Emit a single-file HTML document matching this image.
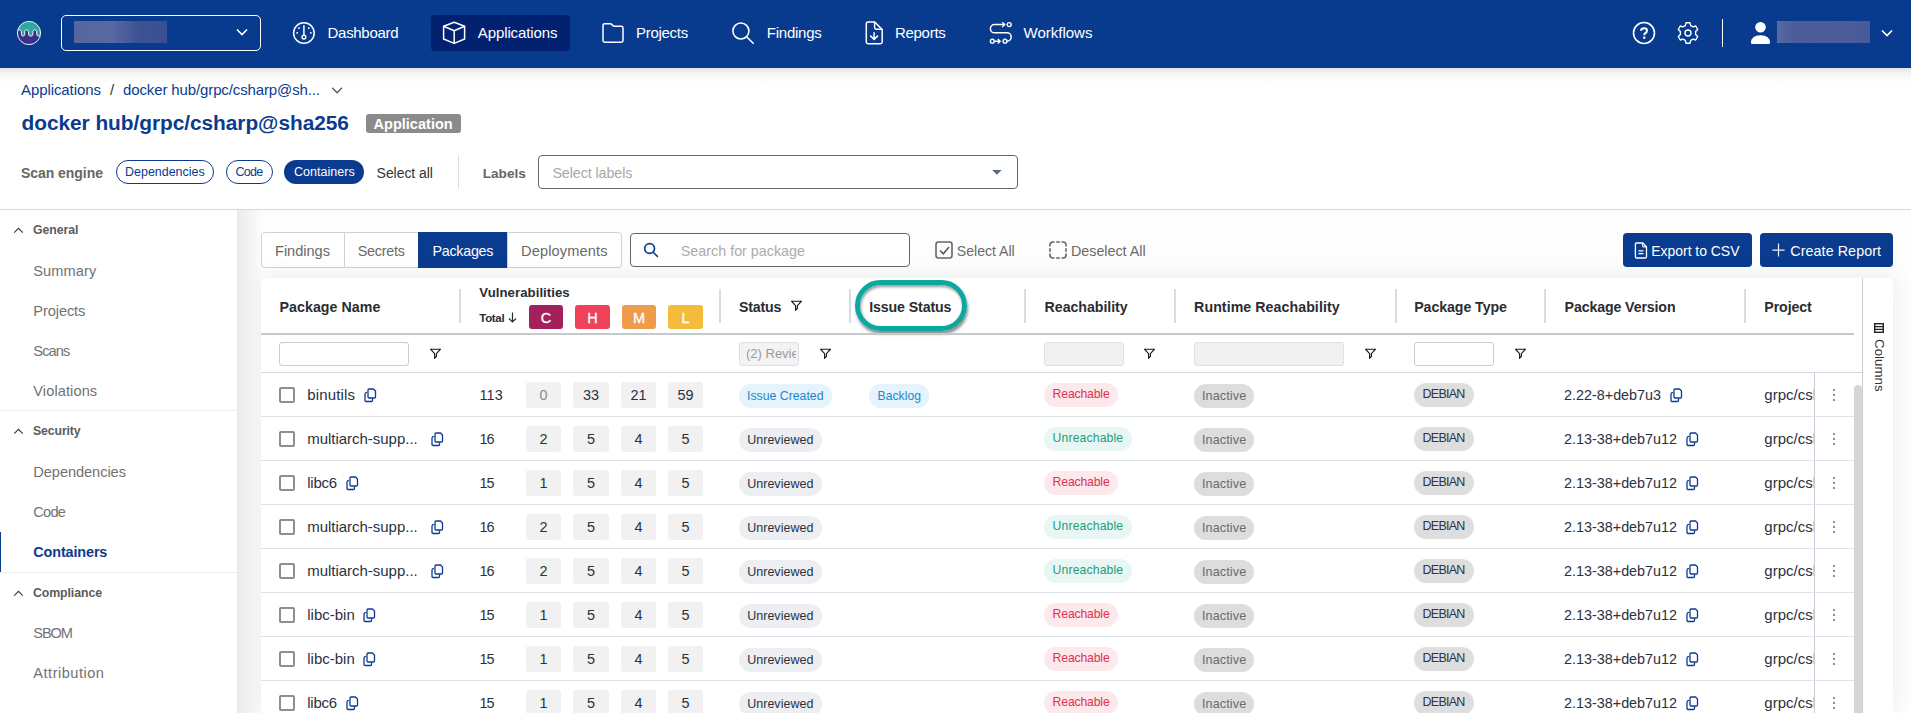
<!DOCTYPE html><html><head><meta charset="utf-8"><style>
html,body{margin:0;padding:0;}
body{width:1911px;height:713px;overflow:hidden;position:relative;background:#fff;font-family:"Liberation Sans",sans-serif;}
.t{position:absolute;line-height:1;white-space:nowrap;}
.b{position:absolute;box-sizing:border-box;}
</style></head><body>
<div class="b" style="left:0px;top:0px;width:1911px;height:68px;background:#083a8e;"></div>
<div class="b" style="left:0px;top:68px;width:1911px;height:15px;background:linear-gradient(#e3e3e3,#f2f2f2 30%,#fafafa 65%,rgba(255,255,255,0));"></div>
<svg class="b" style="left:16px;top:20px;" width="27" height="27" viewBox="0 0 27 27"><clipPath id="lc"><circle cx="13" cy="13" r="11.6"/></clipPath>
<g clip-path="url(#lc)"><rect x="0" y="0" width="27" height="27" fill="#2da89f"/>
<path d="M-1 9.8 L3.4 9.8 Q5.4 9.8 5.4 11.8 L5.4 14.1 Q5.4 16.1 7.05 16.1 Q8.7 16.1 8.7 14.1 L8.7 11.8 Q8.7 9.8 10.6 9.8 Q12.5 9.8 12.5 11.8 L12.5 14.1 Q12.5 16.1 14.7 16.1 Q16.9 16.1 16.9 14.1 L16.9 11.8 Q16.9 9.8 18.8 9.8 Q20.7 9.8 20.7 11.8 L20.7 14.1 Q20.7 16.1 22.7 16.1 L28 16.5 L28 28 L-1 28 Z" fill="#3c2f8a" stroke="#fff" stroke-width="0.9"/></g>
<circle cx="13" cy="13" r="11.6" fill="none" stroke="#fff" stroke-width="0.9"/></svg>
<div class="b" style="left:61px;top:15px;width:200px;height:36px;border:1.5px solid #fff;border-radius:5px;"></div>
<div class="b" style="left:74px;top:21px;width:93px;height:22px;background:linear-gradient(90deg,#5866a0 0%,#5a68a2 40%,#3d5293 70%,#3a4f92 100%);"></div>
<svg class="b" style="left:236px;top:28px;" width="12" height="8" viewBox="0 0 12 8"><path d="M1 1.5 L6 6.5 L11 1.5" fill="none" stroke="#fff" stroke-width="1.6"/></svg>
<div class="b" style="left:431px;top:15px;width:139px;height:36px;background:#022171;border-radius:4px;"></div>
<svg class="b" style="left:291px;top:21px;" width="26" height="24" viewBox="0 0 26 24"><circle cx="12.9" cy="12" r="10.3" fill="none" stroke="#fff" stroke-width="1.5"/>
<line x1="12.9" y1="4.3" x2="12.9" y2="14" stroke="#fff" stroke-width="1.5"/><circle cx="12.9" cy="16.1" r="1.9" fill="none" stroke="#fff" stroke-width="1.4"/>
<rect x="7.2" y="6.3" width="1.6" height="1.6" fill="#fff"/><rect x="17" y="6.3" width="1.6" height="1.6" fill="#fff"/><rect x="5.4" y="11.1" width="1.6" height="1.6" fill="#fff"/><rect x="19" y="11.1" width="1.6" height="1.6" fill="#fff"/></svg>
<div class="t" style="left:327.60px;top:25px;font-size:15px;letter-spacing:-0.313px;color:#fff;font-weight:normal;">Dashboard</div>
<svg class="b" style="left:441px;top:21px;" width="26" height="24" viewBox="0 0 26 24"><path d="M13.2 1.3 L23.6 5.2 L23.6 18 L13.2 22.4 L2.6 18 L2.6 5.2 Z" fill="none" stroke="#fff" stroke-width="1.5" stroke-linejoin="round"/>
<path d="M2.6 5.2 L13.2 9.8 L23.6 5.2 M13.2 9.8 L13.2 22.4" fill="none" stroke="#fff" stroke-width="1.5" stroke-linejoin="round"/></svg>
<div class="t" style="left:477.80px;top:25px;font-size:15px;letter-spacing:-0.109px;color:#fff;font-weight:normal;">Applications</div>
<svg class="b" style="left:600px;top:21px;" width="26" height="24" viewBox="0 0 26 24"><path d="M3 4.5 Q3 2.8 4.7 2.8 L10.3 2.8 Q11.2 2.8 12 3.6 L13 4.6 Q13.8 5.3 14.8 5.3 L21.3 5.3 Q23 5.3 23 7 L23 19.5 Q23 21.2 21.3 21.2 L4.7 21.2 Q3 21.2 3 19.5 Z" fill="none" stroke="#fff" stroke-width="1.5" stroke-linejoin="round"/></svg>
<div class="t" style="left:635.90px;top:25px;font-size:15px;letter-spacing:-0.257px;color:#fff;font-weight:normal;">Projects</div>
<svg class="b" style="left:729px;top:20px;" width="28" height="26" viewBox="0 0 28 26"><circle cx="11.9" cy="11" r="8" fill="none" stroke="#fff" stroke-width="1.6"/><line x1="17.6" y1="16.8" x2="24.2" y2="23.3" stroke="#fff" stroke-width="1.6" stroke-linecap="round"/></svg>
<div class="t" style="left:766.80px;top:25px;font-size:15px;letter-spacing:-0.243px;color:#fff;font-weight:normal;">Findings</div>
<svg class="b" style="left:861px;top:20px;" width="26" height="26" viewBox="0 0 26 26"><path d="M7 2.1 L13.8 2.1 L21.2 9.5 L21.2 22 Q21.2 23.7 19.5 23.7 L7 23.7 Q5.3 23.7 5.3 22 L5.3 3.8 Q5.3 2.1 7 2.1 Z" fill="none" stroke="#fff" stroke-width="1.5" stroke-linejoin="round"/>
<path d="M13.6 2.1 L13.6 7.5 Q13.6 9.2 15.3 9.2 L21.2 9.2" fill="none" stroke="#fff" stroke-width="1.4"/>
<path d="M13.1 12.2 L13.1 19.3 M9.2 15.6 L13.1 19.4 L17 15.6" fill="none" stroke="#fff" stroke-width="1.5"/></svg>
<div class="t" style="left:894.90px;top:25px;font-size:15px;letter-spacing:-0.267px;color:#fff;font-weight:normal;">Reports</div>
<svg class="b" style="left:986px;top:19px;" width="30" height="28" viewBox="0 0 30 28"><circle cx="23.2" cy="5.6" r="2" fill="none" stroke="#fff" stroke-width="1.4"/>
<path d="M18.5 5.6 L8.5 5.6 A4.1 4.1 0 0 0 8.5 13.8 L21 13.8 A4.2 4.2 0 0 1 21 22.2" fill="none" stroke="#fff" stroke-width="1.5"/>
<path d="M16.2 3.2 L18.7 5.6 L16.2 8" fill="none" stroke="#fff" stroke-width="1.4"/>
<circle cx="6.3" cy="22.2" r="1.9" fill="none" stroke="#fff" stroke-width="1.4"/><path d="M8.3 22.2 L14.2 22.2 M11.8 19.9 L14.2 22.2 L11.8 24.5" fill="none" stroke="#fff" stroke-width="1.4"/>
<circle cx="19" cy="22.2" r="1.9" fill="none" stroke="#fff" stroke-width="1.4"/></svg>
<div class="t" style="left:1023.60px;top:25px;font-size:15px;letter-spacing:-0.012px;color:#fff;font-weight:normal;">Workflows</div>
<svg class="b" style="left:1632px;top:21px;" width="24" height="24" viewBox="0 0 24 24"><circle cx="12" cy="12" r="10.5" fill="none" stroke="#fff" stroke-width="1.6"/>
<path d="M9 9.8 Q9 7.3 12 7.3 Q15 7.3 15 9.6 Q15 11.3 13.3 12.1 Q12.2 12.7 12.2 14.3" fill="none" stroke="#fff" stroke-width="2"/><circle cx="12.2" cy="16.7" r="1.2" fill="#fff"/></svg>
<svg class="b" style="left:1676px;top:21px;" width="24" height="24" viewBox="0 0 24 24"><path d="M10 1.8 L14 1.8 L14.7 4.6 L17 5.9 L19.7 5 L21.7 8.5 L19.6 10.5 L19.6 13.5 L21.7 15.5 L19.7 19 L17 18.1 L14.7 19.4 L14 22.2 L10 22.2 L9.3 19.4 L7 18.1 L4.3 19 L2.3 15.5 L4.4 13.5 L4.4 10.5 L2.3 8.5 L4.3 5 L7 5.9 L9.3 4.6 Z" fill="none" stroke="#fff" stroke-width="1.4" stroke-linejoin="round"/>
<circle cx="12" cy="12" r="3" fill="none" stroke="#fff" stroke-width="1.4"/></svg>
<div class="b" style="left:1722px;top:19px;width:1px;height:28px;background:#fff;"></div>
<svg class="b" style="left:1748px;top:21px;" width="24" height="24" viewBox="0 0 24 24"><circle cx="12.5" cy="6.3" r="5.3" fill="#fff"/><path d="M3 21.8 Q3 14.2 12.5 14.2 Q22 14.2 22 21.8 Q22 23 20.8 23 L4.2 23 Q3 23 3 21.8 Z" fill="#fff"/></svg>
<div class="b" style="left:1777px;top:21px;width:93px;height:22px;background:linear-gradient(90deg,#5a68a0 0%,#4b5c98 20%,#4d5d99 80%,#46589a 100%);"></div>
<svg class="b" style="left:1881px;top:29px;" width="12" height="8" viewBox="0 0 12 8"><path d="M1 1.5 L6 6.5 L11 1.5" fill="none" stroke="#fff" stroke-width="1.6"/></svg>
<div class="t" style="left:21.00px;top:82px;font-size:15px;letter-spacing:-0.082px;color:#0b3b8f;font-weight:normal;">Applications</div>
<div class="t" style="left:110px;top:82.00px;font-size:15px;color:#333;font-weight:normal;">/</div>
<div class="t" style="left:123.00px;top:82px;font-size:15px;letter-spacing:-0.122px;color:#0b3b8f;font-weight:normal;">docker hub/grpc/csharp@sh...</div>
<svg class="b" style="left:331px;top:86px;" width="13" height="8" viewBox="0 0 13 8"><path d="M1.2 1.8 L6.1 6.8 L11 1.8" fill="none" stroke="#4f5b6d" stroke-width="1.3"/></svg>
<div class="t" style="left:21.50px;top:113px;font-size:20.85px;letter-spacing:-0.038px;color:#0b3b8f;font-weight:bold;">docker hub/grpc/csharp@sha256</div>
<div class="b" style="left:366px;top:114px;width:95px;height:19px;background:#8b8b8b;border-radius:3px;"></div>
<div class="t" style="left:373.50px;top:117px;font-size:14.5px;letter-spacing:0.025px;color:#fff;font-weight:bold;">Application</div>
<div class="t" style="left:21.10px;top:166px;font-size:14px;letter-spacing:-0.065px;color:#666;font-weight:bold;">Scan engine</div>
<div class="b" style="left:116px;top:160px;width:98px;height:24px;border:1.3px solid #0b3b8f;border-radius:12px;"></div>
<div class="t" style="left:125.00px;top:166px;font-size:12.5px;letter-spacing:-0.018px;color:#0b3b8f;font-weight:normal;">Dependencies</div>
<div class="b" style="left:226px;top:160px;width:47px;height:24px;border:1.3px solid #0b3b8f;border-radius:12px;"></div>
<div class="t" style="left:235.50px;top:166px;font-size:12.5px;letter-spacing:-0.700px;color:#0b3b8f;font-weight:normal;">Code</div>
<div class="b" style="left:284px;top:160px;width:80px;height:24px;background:#0b3b8f;border-radius:12px;"></div>
<div class="t" style="left:294.00px;top:166px;font-size:12.5px;letter-spacing:0.028px;color:#fff;font-weight:normal;">Containers</div>
<div class="t" style="left:376.60px;top:166px;font-size:14px;letter-spacing:-0.056px;color:#333;font-weight:normal;">Select all</div>
<div class="b" style="left:458px;top:155px;width:1px;height:34px;background:#ddd;"></div>
<div class="t" style="left:482.80px;top:167px;font-size:13.6px;letter-spacing:-0.020px;color:#666;font-weight:bold;">Labels</div>
<div class="b" style="left:538px;top:155px;width:480px;height:34px;border:1px solid #666;border-radius:4px;"></div>
<div class="t" style="left:552.40px;top:166px;font-size:14.3px;letter-spacing:-0.083px;color:#a7a7a7;font-weight:normal;">Select labels</div>
<svg class="b" style="left:990px;top:169px;" width="13" height="8" viewBox="0 0 13 8"><path d="M2.2 1 L11.7 1 L6.95 5.7 Z" fill="#5a6a7d"/></svg>
<div class="b" style="left:0px;top:209px;width:1911px;height:1px;background:#d3d7dc;"></div>
<div class="b" style="left:237px;top:210px;width:1674px;height:503px;background:#fdfdfd;"></div>
<div class="b" style="left:237px;top:210px;width:26px;height:503px;background:linear-gradient(90deg,rgba(0,0,0,0.075),rgba(0,0,0,0));"></div>
<svg class="b" style="left:13px;top:227px;" width="11" height="7" viewBox="0 0 11 7"><path d="M1.2 5.6 L5.5 1.3 L9.8 5.6" fill="none" stroke="#2e3a4d" stroke-width="1.1"/></svg>
<div class="t" style="left:33.00px;top:224px;font-size:12.3px;letter-spacing:-0.050px;color:#5c5c5c;font-weight:bold;">General</div>
<div class="t" style="left:33.30px;top:264px;font-size:14.6px;letter-spacing:0.092px;color:#727272;font-weight:normal;">Summary</div>
<div class="t" style="left:33.30px;top:304px;font-size:14.6px;letter-spacing:-0.093px;color:#727272;font-weight:normal;">Projects</div>
<div class="t" style="left:33.30px;top:344px;font-size:14.6px;letter-spacing:-0.875px;color:#727272;font-weight:normal;">Scans</div>
<div class="t" style="left:33.30px;top:384px;font-size:14.6px;letter-spacing:0.094px;color:#727272;font-weight:normal;">Violations</div>
<div class="b" style="left:0px;top:410px;width:237px;height:1px;background:#eceef2;"></div>
<svg class="b" style="left:13px;top:428px;" width="11" height="7" viewBox="0 0 11 7"><path d="M1.2 5.6 L5.5 1.3 L9.8 5.6" fill="none" stroke="#2e3a4d" stroke-width="1.1"/></svg>
<div class="t" style="left:33.00px;top:425px;font-size:12.3px;letter-spacing:-0.121px;color:#5c5c5c;font-weight:bold;">Security</div>
<div class="t" style="left:33.30px;top:465px;font-size:14.6px;letter-spacing:-0.059px;color:#727272;font-weight:normal;">Dependencies</div>
<div class="t" style="left:33.30px;top:505px;font-size:14.6px;letter-spacing:-0.733px;color:#727272;font-weight:normal;">Code</div>
<div class="t" style="left:33.30px;top:545px;font-size:14.4px;letter-spacing:-0.122px;color:#0b3b8f;font-weight:bold;">Containers</div>
<div class="b" style="left:0px;top:532px;width:1.2px;height:40px;background:#0b3b8f;"></div>
<div class="b" style="left:0px;top:572px;width:237px;height:1px;background:#eceef2;"></div>
<svg class="b" style="left:13px;top:590px;" width="11" height="7" viewBox="0 0 11 7"><path d="M1.2 5.6 L5.5 1.3 L9.8 5.6" fill="none" stroke="#2e3a4d" stroke-width="1.1"/></svg>
<div class="t" style="left:33.00px;top:587px;font-size:12.3px;letter-spacing:-0.078px;color:#5c5c5c;font-weight:bold;">Compliance</div>
<div class="t" style="left:33.30px;top:626px;font-size:14.6px;letter-spacing:-1.100px;color:#727272;font-weight:normal;">SBOM</div>
<div class="t" style="left:33.30px;top:666px;font-size:14.6px;letter-spacing:0.495px;color:#727272;font-weight:normal;">Attribution</div>
<div class="b" style="left:261px;top:232px;width:361px;height:36px;background:#fff;border:1px solid #cfd3d8;border-radius:4px;"></div>
<div class="b" style="left:344px;top:232px;width:1px;height:36px;background:#cfd3d8;"></div>
<div class="b" style="left:418px;top:232px;width:89px;height:36px;background:#0b3b8f;"></div>
<div class="b" style="left:507px;top:232px;width:1px;height:36px;background:#cfd3d8;"></div>
<div class="t" style="left:275.00px;top:244px;font-size:14.6px;letter-spacing:-0.029px;color:#6a6a6a;font-weight:normal;">Findings</div>
<div class="t" style="left:357.80px;top:244px;font-size:14.3px;letter-spacing:-0.233px;color:#6a6a6a;font-weight:normal;">Secrets</div>
<div class="t" style="left:432.50px;top:244px;font-size:14.3px;letter-spacing:-0.271px;color:#fff;font-weight:normal;">Packages</div>
<div class="t" style="left:521.00px;top:244px;font-size:14.6px;letter-spacing:0.130px;color:#6a6a6a;font-weight:normal;">Deployments</div>
<div class="b" style="left:630px;top:233px;width:280px;height:34px;background:#fff;border:1px solid #666;border-radius:4px;"></div>
<svg class="b" style="left:643px;top:242px;" width="16" height="16" viewBox="0 0 16 16"><circle cx="6.6" cy="6.5" r="4.9" fill="none" stroke="#0b3b8f" stroke-width="1.7"/><line x1="10.2" y1="10.2" x2="14.4" y2="14.4" stroke="#0b3b8f" stroke-width="1.5" stroke-linecap="round"/></svg>
<div class="t" style="left:680.80px;top:244px;font-size:14.3px;letter-spacing:0.012px;color:#ababab;font-weight:normal;">Search for package</div>
<svg class="b" style="left:934.5px;top:241px;" width="18" height="18" viewBox="0 0 18 18"><rect x="1" y="1" width="16" height="16" rx="2.5" fill="none" stroke="#666" stroke-width="1.6"/><path d="M5 9.5 L8.3 12.8 L14 6" fill="none" stroke="#555" stroke-width="1.5"/></svg>
<div class="t" style="left:956.80px;top:244px;font-size:14.15px;letter-spacing:-0.033px;color:#6a6a6a;font-weight:normal;">Select All</div>
<svg class="b" style="left:1048.5px;top:241px;" width="18" height="18" viewBox="0 0 18 18"><path d="M1 5.5 L1 4 Q1 1 4 1 L5.5 1 M12.5 1 L14 1 Q17 1 17 4 L17 5.5 M17 12.5 L17 14 Q17 17 14 17 L12.5 17 M5.5 17 L4 17 Q1 17 1 14 L1 12.5 M7.2 1 L10.8 1 M17 7.2 L17 10.8 M10.8 17 L7.2 17 M1 10.8 L1 7.2" fill="none" stroke="#666" stroke-width="1.6"/></svg>
<div class="t" style="left:1071.00px;top:244px;font-size:14.3px;letter-spacing:-0.009px;color:#6a6a6a;font-weight:normal;">Deselect All</div>
<div class="b" style="left:1623px;top:233px;width:129px;height:34px;background:#0b3b8f;border-radius:4px;"></div>
<svg class="b" style="left:1634px;top:242px;" width="14" height="17" viewBox="0 0 14 17"><path d="M2.6 1 L8.8 1 L12.5 4.7 L12.5 14.8 Q12.5 16 11.3 16 L2.6 16 Q1.4 16 1.4 14.8 L1.4 2.2 Q1.4 1 2.6 1 Z" fill="none" stroke="#fff" stroke-width="1.3" stroke-linejoin="round"/><path d="M8.6 1.2 L8.6 3.8 Q8.6 4.9 9.7 4.9 L12.3 4.9" fill="none" stroke="#fff" stroke-width="1.1"/><path d="M4.4 8.8 L9.4 8.8 M4.4 11.6 L9.4 11.6" stroke="#fff" stroke-width="1.3"/></svg>
<div class="t" style="left:1651.30px;top:244px;font-size:14px;letter-spacing:-0.042px;color:#fff;font-weight:normal;">Export to CSV</div>
<div class="b" style="left:1760px;top:233px;width:133px;height:34px;background:#0b3b8f;border-radius:4px;"></div>
<svg class="b" style="left:1772px;top:243px;" width="14" height="14" viewBox="0 0 14 14"><path d="M6.5 0.6 L6.5 13.6 M0.4 7 L12.6 7" stroke="#f0f0f5" stroke-width="1.25"/></svg>
<div class="t" style="left:1790.30px;top:244px;font-size:14.3px;letter-spacing:0.075px;color:#fff;font-weight:normal;">Create Report</div>
<div class="b" style="left:261px;top:278px;width:1632px;height:435px;background:#fff;border-radius:5px 5px 0 0;box-shadow:0 -2px 22px rgba(0,0,0,0.075);"></div>
<div class="t" style="left:279.60px;top:300px;font-size:14.2px;letter-spacing:0.050px;color:#2a2d33;font-weight:bold;">Package Name</div>
<div class="b" style="left:459px;top:289px;width:1.5px;height:34px;background:#d6dbe6;"></div>
<div class="b" style="left:719px;top:289px;width:1.5px;height:34px;background:#d6dbe6;"></div>
<div class="b" style="left:849px;top:289px;width:1.5px;height:34px;background:#d6dbe6;"></div>
<div class="b" style="left:1024px;top:289px;width:1.5px;height:34px;background:#d6dbe6;"></div>
<div class="b" style="left:1174px;top:289px;width:1.5px;height:34px;background:#d6dbe6;"></div>
<div class="b" style="left:1395px;top:289px;width:1.5px;height:34px;background:#d6dbe6;"></div>
<div class="b" style="left:1544px;top:289px;width:1.5px;height:34px;background:#d6dbe6;"></div>
<div class="b" style="left:1744px;top:289px;width:1.5px;height:34px;background:#d6dbe6;"></div>
<div class="t" style="left:479.30px;top:286px;font-size:13.2px;letter-spacing:0.054px;color:#2a2d33;font-weight:bold;">Vulnerabilities</div>
<div class="t" style="left:479.30px;top:313px;font-size:11.5px;letter-spacing:-0.325px;color:#2a2d33;font-weight:bold;">Total</div>
<svg class="b" style="left:508px;top:312px;" width="9" height="11" viewBox="0 0 9 11"><path d="M4.5 0.5 L4.5 10 M1 6.5 L4.5 10 L8 6.5" fill="none" stroke="#2a2d33" stroke-width="1.2"/></svg>
<div class="b" style="left:529px;top:305px;width:34px;height:24px;background:#a3205c;border-radius:3px;"></div>
<div class="t" style="left:529px;top:305px;width:34px;height:24px;line-height:26px;text-align:center;font-size:14.5px;font-weight:normal;color:#fff;-webkit-text-stroke:0.3px #fff;">C</div>
<div class="b" style="left:575px;top:305px;width:35px;height:24px;background:#f0415a;border-radius:3px;"></div>
<div class="t" style="left:575px;top:305px;width:35px;height:24px;line-height:26px;text-align:center;font-size:14.5px;font-weight:normal;color:#fff;-webkit-text-stroke:0.3px #fff;">H</div>
<div class="b" style="left:622px;top:305px;width:34px;height:24px;background:#ee9b4c;border-radius:3px;"></div>
<div class="t" style="left:622px;top:305px;width:34px;height:24px;line-height:26px;text-align:center;font-size:14.5px;font-weight:normal;color:#fff;-webkit-text-stroke:0.3px #fff;">M</div>
<div class="b" style="left:668px;top:305px;width:35px;height:24px;background:#f4bc3a;border-radius:3px;"></div>
<div class="t" style="left:668px;top:305px;width:35px;height:24px;line-height:26px;text-align:center;font-size:14.5px;font-weight:normal;color:#fff;-webkit-text-stroke:0.3px #fff;">L</div>
<div class="t" style="left:739.10px;top:300px;font-size:14.2px;letter-spacing:-0.220px;color:#2a2d33;font-weight:bold;">Status</div>
<svg class="b" style="left:791px;top:300px;" width="11" height="11" viewBox="0 0 11 11"><path d="M0.6 1.2 L10.4 1.2 L6.4 5.6 L6.4 8.4 L4.6 10.2 L4.6 5.6 Z" fill="none" stroke="#1a1a1a" stroke-width="1.15" stroke-linejoin="miter"/></svg>
<div class="t" style="left:869.20px;top:300px;font-size:14.2px;letter-spacing:-0.114px;color:#2a2d33;font-weight:bold;">Issue Status</div>
<div class="t" style="left:1044.60px;top:300px;font-size:14.2px;letter-spacing:-0.050px;color:#2a2d33;font-weight:bold;">Reachability</div>
<div class="t" style="left:1194.10px;top:300px;font-size:14.2px;letter-spacing:0.063px;color:#2a2d33;font-weight:bold;">Runtime Reachability</div>
<div class="t" style="left:1414.20px;top:300px;font-size:14.2px;letter-spacing:-0.077px;color:#2a2d33;font-weight:bold;">Package Type</div>
<div class="t" style="left:1564.60px;top:300px;font-size:14.2px;letter-spacing:-0.129px;color:#2a2d33;font-weight:bold;">Package Version</div>
<div class="t" style="left:1764.30px;top:300px;font-size:14.2px;letter-spacing:-0.092px;color:#2a2d33;font-weight:bold;">Project</div>
<div class="b" style="left:855px;top:280px;width:112px;height:51px;border:5px solid #0aa89f;border-radius:26px;box-shadow:1px 3px 3px rgba(0,0,0,0.45), inset 1px 2px 3px rgba(0,0,0,0.4);"></div>
<div class="b" style="left:261px;top:333px;width:1593px;height:2px;background:#c5c8cd;"></div>
<div class="b" style="left:279px;top:342px;width:130px;height:24px;border:1px solid #c9ccd1;border-radius:3px;background:#fff;"></div>
<svg class="b" style="left:430px;top:348px;" width="11" height="11" viewBox="0 0 11 11"><path d="M0.6 1.2 L10.4 1.2 L6.4 5.6 L6.4 8.4 L4.6 10.2 L4.6 5.6 Z" fill="none" stroke="#1a1a1a" stroke-width="1.15" stroke-linejoin="miter"/></svg>
<div class="b" style="left:739px;top:342px;width:60px;height:24px;border:1px solid #dde0e5;border-radius:3px;background:#f3f3f4;"></div>
<div class="t" style="left:746px;top:345px;width:50px;height:17px;line-height:17px;overflow:hidden;font-size:13px;color:#9a9a9a;">(2) Reviewed</div>
<svg class="b" style="left:820px;top:348px;" width="11" height="11" viewBox="0 0 11 11"><path d="M0.6 1.2 L10.4 1.2 L6.4 5.6 L6.4 8.4 L4.6 10.2 L4.6 5.6 Z" fill="none" stroke="#1a1a1a" stroke-width="1.15" stroke-linejoin="miter"/></svg>
<div class="b" style="left:1044px;top:342px;width:80px;height:24px;border:1px solid #e0e0e0;border-radius:3px;background:#f1f1f1;"></div>
<svg class="b" style="left:1144px;top:348px;" width="11" height="11" viewBox="0 0 11 11"><path d="M0.6 1.2 L10.4 1.2 L6.4 5.6 L6.4 8.4 L4.6 10.2 L4.6 5.6 Z" fill="none" stroke="#1a1a1a" stroke-width="1.15" stroke-linejoin="miter"/></svg>
<div class="b" style="left:1194px;top:342px;width:150px;height:24px;border:1px solid #e0e0e0;border-radius:3px;background:#f1f1f1;"></div>
<svg class="b" style="left:1365px;top:348px;" width="11" height="11" viewBox="0 0 11 11"><path d="M0.6 1.2 L10.4 1.2 L6.4 5.6 L6.4 8.4 L4.6 10.2 L4.6 5.6 Z" fill="none" stroke="#1a1a1a" stroke-width="1.15" stroke-linejoin="miter"/></svg>
<div class="b" style="left:1414px;top:342px;width:80px;height:24px;border:1px solid #c9ccd1;border-radius:3px;background:#fff;"></div>
<svg class="b" style="left:1515px;top:348px;" width="11" height="11" viewBox="0 0 11 11"><path d="M0.6 1.2 L10.4 1.2 L6.4 5.6 L6.4 8.4 L4.6 10.2 L4.6 5.6 Z" fill="none" stroke="#1a1a1a" stroke-width="1.15" stroke-linejoin="miter"/></svg>
<div class="b" style="left:261px;top:372px;width:1601px;height:1px;background:#d3d7df;"></div>
<div class="b" style="left:1862px;top:278px;width:1px;height:435px;background:#c9cdd4;"></div>
<svg class="b" style="left:1874px;top:323px;" width="10" height="10" viewBox="0 0 10 10"><rect x="0.7" y="0.7" width="8.6" height="8.6" fill="none" stroke="#222" stroke-width="1.4"/><path d="M0.7 3.6 L9.3 3.6 M0.7 6.4 L9.3 6.4" stroke="#222" stroke-width="1.2"/></svg>
<div class="t" style="left:1886px;top:339px;font-size:13.35px;color:#333;transform-origin:0 0;transform:rotate(90deg);">Columns</div>
<div class="b" style="left:279px;top:387px;width:16px;height:16px;border:2px solid #8e8e8e;border-radius:2px;"></div>
<div class="t" style="left:307.20px;top:387px;font-size:15px;letter-spacing:0.157px;color:#2b3140;font-weight:normal;">binutils</div>
<svg class="b" style="left:364px;top:388px;" width="13" height="15" viewBox="0 0 13 15"><path d="M4 3 L4 2 Q4 1 5 1 L9.5 1 L11.5 3 L11.5 9 Q11.5 10 10.5 10 L5 10 Q4 10 4 9 Z" fill="none" stroke="#0b3b8f" stroke-width="1.3" stroke-linejoin="round"/><path d="M3 4.3 Q1 4.5 1 6 L1 12.5 Q1 13.5 2 13.5 L7.5 13.5 Q8.5 13.5 8.5 12.5 L8.5 10.5" fill="none" stroke="#0b3b8f" stroke-width="1.3"/></svg>
<div class="t" style="left:479.50px;top:388px;font-size:14.45px;letter-spacing:0.075px;color:#2b3140;font-weight:normal;">113</div>
<div class="b" style="left:526px;top:382px;width:35px;height:26px;background:#f1f1f1;border-radius:3px;"></div>
<div class="t" style="left:526px;top:382px;width:35px;line-height:26px;text-align:center;font-size:14.45px;color:#8a8a8a;">0</div>
<div class="b" style="left:573px;top:382px;width:36px;height:26px;background:#f1f1f1;border-radius:3px;"></div>
<div class="t" style="left:573px;top:382px;width:36px;line-height:26px;text-align:center;font-size:14.45px;color:#2b3140;">33</div>
<div class="b" style="left:621px;top:382px;width:35px;height:26px;background:#f1f1f1;border-radius:3px;"></div>
<div class="t" style="left:621px;top:382px;width:35px;line-height:26px;text-align:center;font-size:14.45px;color:#2b3140;">21</div>
<div class="b" style="left:668px;top:382px;width:35px;height:26px;background:#f1f1f1;border-radius:3px;"></div>
<div class="t" style="left:668px;top:382px;width:35px;line-height:26px;text-align:center;font-size:14.45px;color:#2b3140;">59</div>
<div class="b" style="left:739px;top:384px;width:93px;height:24px;background:#e4f3fc;border-radius:12px;"></div>
<div class="t" style="left:747.00px;top:390px;font-size:12.3px;letter-spacing:-0.004px;color:#1f86cf;font-weight:normal;">Issue Created</div>
<div class="b" style="left:869px;top:384px;width:60px;height:24px;background:#e4f3fc;border-radius:12px;"></div>
<div class="t" style="left:877.60px;top:390px;font-size:12.2px;letter-spacing:-0.000px;color:#1f86cf;font-weight:normal;">Backlog</div>
<div class="b" style="left:1044px;top:383px;width:74px;height:24px;background:#fde8eb;border-radius:12px;"></div>
<div class="t" style="left:1052.60px;top:388px;font-size:12.2px;letter-spacing:-0.144px;color:#d9344d;font-weight:normal;">Reachable</div>
<div class="b" style="left:1194px;top:384px;width:60px;height:24px;background:#dddddd;border-radius:12px;"></div>
<div class="t" style="left:1202.00px;top:390px;font-size:12.6px;letter-spacing:0.114px;color:#6b6b6b;font-weight:normal;">Inactive</div>
<div class="b" style="left:1414px;top:383px;width:60px;height:24px;background:#dedede;border-radius:12px;"></div>
<div class="t" style="left:1422.60px;top:388px;font-size:12.5px;letter-spacing:-0.770px;color:#2f3440;font-weight:normal;">DEBIAN</div>
<div class="t" style="left:1564.10px;top:388px;font-size:14.4px;letter-spacing:-0.025px;color:#2b3140;font-weight:normal;">2.22-8+deb7u3</div>
<svg class="b" style="left:1669.5px;top:388px;" width="13" height="15" viewBox="0 0 13 15"><path d="M4 3 L4 2 Q4 1 5 1 L9.5 1 L11.5 3 L11.5 9 Q11.5 10 10.5 10 L5 10 Q4 10 4 9 Z" fill="none" stroke="#0b3b8f" stroke-width="1.3" stroke-linejoin="round"/><path d="M3 4.3 Q1 4.5 1 6 L1 12.5 Q1 13.5 2 13.5 L7.5 13.5 Q8.5 13.5 8.5 12.5 L8.5 10.5" fill="none" stroke="#0b3b8f" stroke-width="1.3"/></svg>
<div class="t" style="left:1764.3px;top:384px;width:50px;height:21px;line-height:21px;overflow:hidden;font-size:15px;color:#2b3140;"><span style="position:relative;top:0px">grpc/csharp</span></div>
<div class="b" style="left:1814px;top:373px;width:1px;height:43px;background:#c8cdd6;"></div>
<div class="b" style="left:1833px;top:389px;width:2px;height:2px;background:#8a909b;"></div>
<div class="b" style="left:1833px;top:394px;width:2px;height:2px;background:#8a909b;"></div>
<div class="b" style="left:1833px;top:399px;width:2px;height:2px;background:#8a909b;"></div>
<div class="b" style="left:261px;top:416px;width:1601px;height:1px;background:#dde1ea;"></div>
<div class="b" style="left:279px;top:431px;width:16px;height:16px;border:2px solid #8e8e8e;border-radius:2px;"></div>
<div class="t" style="left:307.20px;top:431px;font-size:15px;letter-spacing:-0.022px;color:#2b3140;font-weight:normal;">multiarch-supp...</div>
<svg class="b" style="left:431px;top:432px;" width="13" height="15" viewBox="0 0 13 15"><path d="M4 3 L4 2 Q4 1 5 1 L9.5 1 L11.5 3 L11.5 9 Q11.5 10 10.5 10 L5 10 Q4 10 4 9 Z" fill="none" stroke="#0b3b8f" stroke-width="1.3" stroke-linejoin="round"/><path d="M3 4.3 Q1 4.5 1 6 L1 12.5 Q1 13.5 2 13.5 L7.5 13.5 Q8.5 13.5 8.5 12.5 L8.5 10.5" fill="none" stroke="#0b3b8f" stroke-width="1.3"/></svg>
<div class="t" style="left:479.50px;top:432px;font-size:14.45px;letter-spacing:-1.050px;color:#2b3140;font-weight:normal;">16</div>
<div class="b" style="left:526px;top:426px;width:35px;height:26px;background:#f1f1f1;border-radius:3px;"></div>
<div class="t" style="left:526px;top:426px;width:35px;line-height:26px;text-align:center;font-size:14.45px;color:#2b3140;">2</div>
<div class="b" style="left:573px;top:426px;width:36px;height:26px;background:#f1f1f1;border-radius:3px;"></div>
<div class="t" style="left:573px;top:426px;width:36px;line-height:26px;text-align:center;font-size:14.45px;color:#2b3140;">5</div>
<div class="b" style="left:621px;top:426px;width:35px;height:26px;background:#f1f1f1;border-radius:3px;"></div>
<div class="t" style="left:621px;top:426px;width:35px;line-height:26px;text-align:center;font-size:14.45px;color:#2b3140;">4</div>
<div class="b" style="left:668px;top:426px;width:35px;height:26px;background:#f1f1f1;border-radius:3px;"></div>
<div class="t" style="left:668px;top:426px;width:35px;line-height:26px;text-align:center;font-size:14.45px;color:#2b3140;">5</div>
<div class="b" style="left:739px;top:428px;width:83px;height:24px;background:#eceef1;border-radius:12px;"></div>
<div class="t" style="left:747.20px;top:434px;font-size:12.5px;letter-spacing:0.022px;color:#2b3140;font-weight:normal;">Unreviewed</div>
<div class="b" style="left:1044px;top:427px;width:88px;height:24px;background:#e8f7f3;border-radius:12px;"></div>
<div class="t" style="left:1052.60px;top:432px;font-size:12.2px;letter-spacing:0.140px;color:#1e9c7b;font-weight:normal;">Unreachable</div>
<div class="b" style="left:1194px;top:428px;width:60px;height:24px;background:#dddddd;border-radius:12px;"></div>
<div class="t" style="left:1202.00px;top:434px;font-size:12.6px;letter-spacing:0.114px;color:#6b6b6b;font-weight:normal;">Inactive</div>
<div class="b" style="left:1414px;top:427px;width:60px;height:24px;background:#dedede;border-radius:12px;"></div>
<div class="t" style="left:1422.60px;top:432px;font-size:12.5px;letter-spacing:-0.770px;color:#2f3440;font-weight:normal;">DEBIAN</div>
<div class="t" style="left:1564.10px;top:432px;font-size:14.4px;letter-spacing:-0.021px;color:#2b3140;font-weight:normal;">2.13-38+deb7u12</div>
<svg class="b" style="left:1686.0px;top:432px;" width="13" height="15" viewBox="0 0 13 15"><path d="M4 3 L4 2 Q4 1 5 1 L9.5 1 L11.5 3 L11.5 9 Q11.5 10 10.5 10 L5 10 Q4 10 4 9 Z" fill="none" stroke="#0b3b8f" stroke-width="1.3" stroke-linejoin="round"/><path d="M3 4.3 Q1 4.5 1 6 L1 12.5 Q1 13.5 2 13.5 L7.5 13.5 Q8.5 13.5 8.5 12.5 L8.5 10.5" fill="none" stroke="#0b3b8f" stroke-width="1.3"/></svg>
<div class="t" style="left:1764.3px;top:428px;width:50px;height:21px;line-height:21px;overflow:hidden;font-size:15px;color:#2b3140;"><span style="position:relative;top:0px">grpc/csharp</span></div>
<div class="b" style="left:1814px;top:417px;width:1px;height:43px;background:#c8cdd6;"></div>
<div class="b" style="left:1833px;top:433px;width:2px;height:2px;background:#8a909b;"></div>
<div class="b" style="left:1833px;top:438px;width:2px;height:2px;background:#8a909b;"></div>
<div class="b" style="left:1833px;top:443px;width:2px;height:2px;background:#8a909b;"></div>
<div class="b" style="left:261px;top:460px;width:1601px;height:1px;background:#dde1ea;"></div>
<div class="b" style="left:279px;top:475px;width:16px;height:16px;border:2px solid #8e8e8e;border-radius:2px;"></div>
<div class="t" style="left:307.20px;top:475px;font-size:15px;letter-spacing:-0.237px;color:#2b3140;font-weight:normal;">libc6</div>
<svg class="b" style="left:346px;top:476px;" width="13" height="15" viewBox="0 0 13 15"><path d="M4 3 L4 2 Q4 1 5 1 L9.5 1 L11.5 3 L11.5 9 Q11.5 10 10.5 10 L5 10 Q4 10 4 9 Z" fill="none" stroke="#0b3b8f" stroke-width="1.3" stroke-linejoin="round"/><path d="M3 4.3 Q1 4.5 1 6 L1 12.5 Q1 13.5 2 13.5 L7.5 13.5 Q8.5 13.5 8.5 12.5 L8.5 10.5" fill="none" stroke="#0b3b8f" stroke-width="1.3"/></svg>
<div class="t" style="left:479.50px;top:476px;font-size:14.45px;letter-spacing:-1.050px;color:#2b3140;font-weight:normal;">15</div>
<div class="b" style="left:526px;top:470px;width:35px;height:26px;background:#f1f1f1;border-radius:3px;"></div>
<div class="t" style="left:526px;top:470px;width:35px;line-height:26px;text-align:center;font-size:14.45px;color:#2b3140;">1</div>
<div class="b" style="left:573px;top:470px;width:36px;height:26px;background:#f1f1f1;border-radius:3px;"></div>
<div class="t" style="left:573px;top:470px;width:36px;line-height:26px;text-align:center;font-size:14.45px;color:#2b3140;">5</div>
<div class="b" style="left:621px;top:470px;width:35px;height:26px;background:#f1f1f1;border-radius:3px;"></div>
<div class="t" style="left:621px;top:470px;width:35px;line-height:26px;text-align:center;font-size:14.45px;color:#2b3140;">4</div>
<div class="b" style="left:668px;top:470px;width:35px;height:26px;background:#f1f1f1;border-radius:3px;"></div>
<div class="t" style="left:668px;top:470px;width:35px;line-height:26px;text-align:center;font-size:14.45px;color:#2b3140;">5</div>
<div class="b" style="left:739px;top:472px;width:83px;height:24px;background:#eceef1;border-radius:12px;"></div>
<div class="t" style="left:747.20px;top:478px;font-size:12.5px;letter-spacing:0.022px;color:#2b3140;font-weight:normal;">Unreviewed</div>
<div class="b" style="left:1044px;top:471px;width:74px;height:24px;background:#fde8eb;border-radius:12px;"></div>
<div class="t" style="left:1052.60px;top:476px;font-size:12.2px;letter-spacing:-0.144px;color:#d9344d;font-weight:normal;">Reachable</div>
<div class="b" style="left:1194px;top:472px;width:60px;height:24px;background:#dddddd;border-radius:12px;"></div>
<div class="t" style="left:1202.00px;top:478px;font-size:12.6px;letter-spacing:0.114px;color:#6b6b6b;font-weight:normal;">Inactive</div>
<div class="b" style="left:1414px;top:471px;width:60px;height:24px;background:#dedede;border-radius:12px;"></div>
<div class="t" style="left:1422.60px;top:476px;font-size:12.5px;letter-spacing:-0.770px;color:#2f3440;font-weight:normal;">DEBIAN</div>
<div class="t" style="left:1564.10px;top:476px;font-size:14.4px;letter-spacing:-0.021px;color:#2b3140;font-weight:normal;">2.13-38+deb7u12</div>
<svg class="b" style="left:1686.0px;top:476px;" width="13" height="15" viewBox="0 0 13 15"><path d="M4 3 L4 2 Q4 1 5 1 L9.5 1 L11.5 3 L11.5 9 Q11.5 10 10.5 10 L5 10 Q4 10 4 9 Z" fill="none" stroke="#0b3b8f" stroke-width="1.3" stroke-linejoin="round"/><path d="M3 4.3 Q1 4.5 1 6 L1 12.5 Q1 13.5 2 13.5 L7.5 13.5 Q8.5 13.5 8.5 12.5 L8.5 10.5" fill="none" stroke="#0b3b8f" stroke-width="1.3"/></svg>
<div class="t" style="left:1764.3px;top:472px;width:50px;height:21px;line-height:21px;overflow:hidden;font-size:15px;color:#2b3140;"><span style="position:relative;top:0px">grpc/csharp</span></div>
<div class="b" style="left:1814px;top:461px;width:1px;height:43px;background:#c8cdd6;"></div>
<div class="b" style="left:1833px;top:477px;width:2px;height:2px;background:#8a909b;"></div>
<div class="b" style="left:1833px;top:482px;width:2px;height:2px;background:#8a909b;"></div>
<div class="b" style="left:1833px;top:487px;width:2px;height:2px;background:#8a909b;"></div>
<div class="b" style="left:261px;top:504px;width:1601px;height:1px;background:#dde1ea;"></div>
<div class="b" style="left:279px;top:519px;width:16px;height:16px;border:2px solid #8e8e8e;border-radius:2px;"></div>
<div class="t" style="left:307.20px;top:519px;font-size:15px;letter-spacing:-0.022px;color:#2b3140;font-weight:normal;">multiarch-supp...</div>
<svg class="b" style="left:431px;top:520px;" width="13" height="15" viewBox="0 0 13 15"><path d="M4 3 L4 2 Q4 1 5 1 L9.5 1 L11.5 3 L11.5 9 Q11.5 10 10.5 10 L5 10 Q4 10 4 9 Z" fill="none" stroke="#0b3b8f" stroke-width="1.3" stroke-linejoin="round"/><path d="M3 4.3 Q1 4.5 1 6 L1 12.5 Q1 13.5 2 13.5 L7.5 13.5 Q8.5 13.5 8.5 12.5 L8.5 10.5" fill="none" stroke="#0b3b8f" stroke-width="1.3"/></svg>
<div class="t" style="left:479.50px;top:520px;font-size:14.45px;letter-spacing:-1.050px;color:#2b3140;font-weight:normal;">16</div>
<div class="b" style="left:526px;top:514px;width:35px;height:26px;background:#f1f1f1;border-radius:3px;"></div>
<div class="t" style="left:526px;top:514px;width:35px;line-height:26px;text-align:center;font-size:14.45px;color:#2b3140;">2</div>
<div class="b" style="left:573px;top:514px;width:36px;height:26px;background:#f1f1f1;border-radius:3px;"></div>
<div class="t" style="left:573px;top:514px;width:36px;line-height:26px;text-align:center;font-size:14.45px;color:#2b3140;">5</div>
<div class="b" style="left:621px;top:514px;width:35px;height:26px;background:#f1f1f1;border-radius:3px;"></div>
<div class="t" style="left:621px;top:514px;width:35px;line-height:26px;text-align:center;font-size:14.45px;color:#2b3140;">4</div>
<div class="b" style="left:668px;top:514px;width:35px;height:26px;background:#f1f1f1;border-radius:3px;"></div>
<div class="t" style="left:668px;top:514px;width:35px;line-height:26px;text-align:center;font-size:14.45px;color:#2b3140;">5</div>
<div class="b" style="left:739px;top:516px;width:83px;height:24px;background:#eceef1;border-radius:12px;"></div>
<div class="t" style="left:747.20px;top:522px;font-size:12.5px;letter-spacing:0.022px;color:#2b3140;font-weight:normal;">Unreviewed</div>
<div class="b" style="left:1044px;top:515px;width:88px;height:24px;background:#e8f7f3;border-radius:12px;"></div>
<div class="t" style="left:1052.60px;top:520px;font-size:12.2px;letter-spacing:0.140px;color:#1e9c7b;font-weight:normal;">Unreachable</div>
<div class="b" style="left:1194px;top:516px;width:60px;height:24px;background:#dddddd;border-radius:12px;"></div>
<div class="t" style="left:1202.00px;top:522px;font-size:12.6px;letter-spacing:0.114px;color:#6b6b6b;font-weight:normal;">Inactive</div>
<div class="b" style="left:1414px;top:515px;width:60px;height:24px;background:#dedede;border-radius:12px;"></div>
<div class="t" style="left:1422.60px;top:520px;font-size:12.5px;letter-spacing:-0.770px;color:#2f3440;font-weight:normal;">DEBIAN</div>
<div class="t" style="left:1564.10px;top:520px;font-size:14.4px;letter-spacing:-0.021px;color:#2b3140;font-weight:normal;">2.13-38+deb7u12</div>
<svg class="b" style="left:1686.0px;top:520px;" width="13" height="15" viewBox="0 0 13 15"><path d="M4 3 L4 2 Q4 1 5 1 L9.5 1 L11.5 3 L11.5 9 Q11.5 10 10.5 10 L5 10 Q4 10 4 9 Z" fill="none" stroke="#0b3b8f" stroke-width="1.3" stroke-linejoin="round"/><path d="M3 4.3 Q1 4.5 1 6 L1 12.5 Q1 13.5 2 13.5 L7.5 13.5 Q8.5 13.5 8.5 12.5 L8.5 10.5" fill="none" stroke="#0b3b8f" stroke-width="1.3"/></svg>
<div class="t" style="left:1764.3px;top:516px;width:50px;height:21px;line-height:21px;overflow:hidden;font-size:15px;color:#2b3140;"><span style="position:relative;top:0px">grpc/csharp</span></div>
<div class="b" style="left:1814px;top:505px;width:1px;height:43px;background:#c8cdd6;"></div>
<div class="b" style="left:1833px;top:521px;width:2px;height:2px;background:#8a909b;"></div>
<div class="b" style="left:1833px;top:526px;width:2px;height:2px;background:#8a909b;"></div>
<div class="b" style="left:1833px;top:531px;width:2px;height:2px;background:#8a909b;"></div>
<div class="b" style="left:261px;top:548px;width:1601px;height:1px;background:#dde1ea;"></div>
<div class="b" style="left:279px;top:563px;width:16px;height:16px;border:2px solid #8e8e8e;border-radius:2px;"></div>
<div class="t" style="left:307.20px;top:563px;font-size:15px;letter-spacing:-0.022px;color:#2b3140;font-weight:normal;">multiarch-supp...</div>
<svg class="b" style="left:431px;top:564px;" width="13" height="15" viewBox="0 0 13 15"><path d="M4 3 L4 2 Q4 1 5 1 L9.5 1 L11.5 3 L11.5 9 Q11.5 10 10.5 10 L5 10 Q4 10 4 9 Z" fill="none" stroke="#0b3b8f" stroke-width="1.3" stroke-linejoin="round"/><path d="M3 4.3 Q1 4.5 1 6 L1 12.5 Q1 13.5 2 13.5 L7.5 13.5 Q8.5 13.5 8.5 12.5 L8.5 10.5" fill="none" stroke="#0b3b8f" stroke-width="1.3"/></svg>
<div class="t" style="left:479.50px;top:564px;font-size:14.45px;letter-spacing:-1.050px;color:#2b3140;font-weight:normal;">16</div>
<div class="b" style="left:526px;top:558px;width:35px;height:26px;background:#f1f1f1;border-radius:3px;"></div>
<div class="t" style="left:526px;top:558px;width:35px;line-height:26px;text-align:center;font-size:14.45px;color:#2b3140;">2</div>
<div class="b" style="left:573px;top:558px;width:36px;height:26px;background:#f1f1f1;border-radius:3px;"></div>
<div class="t" style="left:573px;top:558px;width:36px;line-height:26px;text-align:center;font-size:14.45px;color:#2b3140;">5</div>
<div class="b" style="left:621px;top:558px;width:35px;height:26px;background:#f1f1f1;border-radius:3px;"></div>
<div class="t" style="left:621px;top:558px;width:35px;line-height:26px;text-align:center;font-size:14.45px;color:#2b3140;">4</div>
<div class="b" style="left:668px;top:558px;width:35px;height:26px;background:#f1f1f1;border-radius:3px;"></div>
<div class="t" style="left:668px;top:558px;width:35px;line-height:26px;text-align:center;font-size:14.45px;color:#2b3140;">5</div>
<div class="b" style="left:739px;top:560px;width:83px;height:24px;background:#eceef1;border-radius:12px;"></div>
<div class="t" style="left:747.20px;top:566px;font-size:12.5px;letter-spacing:0.022px;color:#2b3140;font-weight:normal;">Unreviewed</div>
<div class="b" style="left:1044px;top:559px;width:88px;height:24px;background:#e8f7f3;border-radius:12px;"></div>
<div class="t" style="left:1052.60px;top:564px;font-size:12.2px;letter-spacing:0.140px;color:#1e9c7b;font-weight:normal;">Unreachable</div>
<div class="b" style="left:1194px;top:560px;width:60px;height:24px;background:#dddddd;border-radius:12px;"></div>
<div class="t" style="left:1202.00px;top:566px;font-size:12.6px;letter-spacing:0.114px;color:#6b6b6b;font-weight:normal;">Inactive</div>
<div class="b" style="left:1414px;top:559px;width:60px;height:24px;background:#dedede;border-radius:12px;"></div>
<div class="t" style="left:1422.60px;top:564px;font-size:12.5px;letter-spacing:-0.770px;color:#2f3440;font-weight:normal;">DEBIAN</div>
<div class="t" style="left:1564.10px;top:564px;font-size:14.4px;letter-spacing:-0.021px;color:#2b3140;font-weight:normal;">2.13-38+deb7u12</div>
<svg class="b" style="left:1686.0px;top:564px;" width="13" height="15" viewBox="0 0 13 15"><path d="M4 3 L4 2 Q4 1 5 1 L9.5 1 L11.5 3 L11.5 9 Q11.5 10 10.5 10 L5 10 Q4 10 4 9 Z" fill="none" stroke="#0b3b8f" stroke-width="1.3" stroke-linejoin="round"/><path d="M3 4.3 Q1 4.5 1 6 L1 12.5 Q1 13.5 2 13.5 L7.5 13.5 Q8.5 13.5 8.5 12.5 L8.5 10.5" fill="none" stroke="#0b3b8f" stroke-width="1.3"/></svg>
<div class="t" style="left:1764.3px;top:560px;width:50px;height:21px;line-height:21px;overflow:hidden;font-size:15px;color:#2b3140;"><span style="position:relative;top:0px">grpc/csharp</span></div>
<div class="b" style="left:1814px;top:549px;width:1px;height:43px;background:#c8cdd6;"></div>
<div class="b" style="left:1833px;top:565px;width:2px;height:2px;background:#8a909b;"></div>
<div class="b" style="left:1833px;top:570px;width:2px;height:2px;background:#8a909b;"></div>
<div class="b" style="left:1833px;top:575px;width:2px;height:2px;background:#8a909b;"></div>
<div class="b" style="left:261px;top:592px;width:1601px;height:1px;background:#dde1ea;"></div>
<div class="b" style="left:279px;top:607px;width:16px;height:16px;border:2px solid #8e8e8e;border-radius:2px;"></div>
<div class="t" style="left:307.20px;top:607px;font-size:15px;letter-spacing:0.014px;color:#2b3140;font-weight:normal;">libc-bin</div>
<svg class="b" style="left:363px;top:608px;" width="13" height="15" viewBox="0 0 13 15"><path d="M4 3 L4 2 Q4 1 5 1 L9.5 1 L11.5 3 L11.5 9 Q11.5 10 10.5 10 L5 10 Q4 10 4 9 Z" fill="none" stroke="#0b3b8f" stroke-width="1.3" stroke-linejoin="round"/><path d="M3 4.3 Q1 4.5 1 6 L1 12.5 Q1 13.5 2 13.5 L7.5 13.5 Q8.5 13.5 8.5 12.5 L8.5 10.5" fill="none" stroke="#0b3b8f" stroke-width="1.3"/></svg>
<div class="t" style="left:479.50px;top:608px;font-size:14.45px;letter-spacing:-1.050px;color:#2b3140;font-weight:normal;">15</div>
<div class="b" style="left:526px;top:602px;width:35px;height:26px;background:#f1f1f1;border-radius:3px;"></div>
<div class="t" style="left:526px;top:602px;width:35px;line-height:26px;text-align:center;font-size:14.45px;color:#2b3140;">1</div>
<div class="b" style="left:573px;top:602px;width:36px;height:26px;background:#f1f1f1;border-radius:3px;"></div>
<div class="t" style="left:573px;top:602px;width:36px;line-height:26px;text-align:center;font-size:14.45px;color:#2b3140;">5</div>
<div class="b" style="left:621px;top:602px;width:35px;height:26px;background:#f1f1f1;border-radius:3px;"></div>
<div class="t" style="left:621px;top:602px;width:35px;line-height:26px;text-align:center;font-size:14.45px;color:#2b3140;">4</div>
<div class="b" style="left:668px;top:602px;width:35px;height:26px;background:#f1f1f1;border-radius:3px;"></div>
<div class="t" style="left:668px;top:602px;width:35px;line-height:26px;text-align:center;font-size:14.45px;color:#2b3140;">5</div>
<div class="b" style="left:739px;top:604px;width:83px;height:24px;background:#eceef1;border-radius:12px;"></div>
<div class="t" style="left:747.20px;top:610px;font-size:12.5px;letter-spacing:0.022px;color:#2b3140;font-weight:normal;">Unreviewed</div>
<div class="b" style="left:1044px;top:603px;width:74px;height:24px;background:#fde8eb;border-radius:12px;"></div>
<div class="t" style="left:1052.60px;top:608px;font-size:12.2px;letter-spacing:-0.144px;color:#d9344d;font-weight:normal;">Reachable</div>
<div class="b" style="left:1194px;top:604px;width:60px;height:24px;background:#dddddd;border-radius:12px;"></div>
<div class="t" style="left:1202.00px;top:610px;font-size:12.6px;letter-spacing:0.114px;color:#6b6b6b;font-weight:normal;">Inactive</div>
<div class="b" style="left:1414px;top:603px;width:60px;height:24px;background:#dedede;border-radius:12px;"></div>
<div class="t" style="left:1422.60px;top:608px;font-size:12.5px;letter-spacing:-0.770px;color:#2f3440;font-weight:normal;">DEBIAN</div>
<div class="t" style="left:1564.10px;top:608px;font-size:14.4px;letter-spacing:-0.021px;color:#2b3140;font-weight:normal;">2.13-38+deb7u12</div>
<svg class="b" style="left:1686.0px;top:608px;" width="13" height="15" viewBox="0 0 13 15"><path d="M4 3 L4 2 Q4 1 5 1 L9.5 1 L11.5 3 L11.5 9 Q11.5 10 10.5 10 L5 10 Q4 10 4 9 Z" fill="none" stroke="#0b3b8f" stroke-width="1.3" stroke-linejoin="round"/><path d="M3 4.3 Q1 4.5 1 6 L1 12.5 Q1 13.5 2 13.5 L7.5 13.5 Q8.5 13.5 8.5 12.5 L8.5 10.5" fill="none" stroke="#0b3b8f" stroke-width="1.3"/></svg>
<div class="t" style="left:1764.3px;top:604px;width:50px;height:21px;line-height:21px;overflow:hidden;font-size:15px;color:#2b3140;"><span style="position:relative;top:0px">grpc/csharp</span></div>
<div class="b" style="left:1814px;top:593px;width:1px;height:43px;background:#c8cdd6;"></div>
<div class="b" style="left:1833px;top:609px;width:2px;height:2px;background:#8a909b;"></div>
<div class="b" style="left:1833px;top:614px;width:2px;height:2px;background:#8a909b;"></div>
<div class="b" style="left:1833px;top:619px;width:2px;height:2px;background:#8a909b;"></div>
<div class="b" style="left:261px;top:636px;width:1601px;height:1px;background:#dde1ea;"></div>
<div class="b" style="left:279px;top:651px;width:16px;height:16px;border:2px solid #8e8e8e;border-radius:2px;"></div>
<div class="t" style="left:307.20px;top:651px;font-size:15px;letter-spacing:0.014px;color:#2b3140;font-weight:normal;">libc-bin</div>
<svg class="b" style="left:363px;top:652px;" width="13" height="15" viewBox="0 0 13 15"><path d="M4 3 L4 2 Q4 1 5 1 L9.5 1 L11.5 3 L11.5 9 Q11.5 10 10.5 10 L5 10 Q4 10 4 9 Z" fill="none" stroke="#0b3b8f" stroke-width="1.3" stroke-linejoin="round"/><path d="M3 4.3 Q1 4.5 1 6 L1 12.5 Q1 13.5 2 13.5 L7.5 13.5 Q8.5 13.5 8.5 12.5 L8.5 10.5" fill="none" stroke="#0b3b8f" stroke-width="1.3"/></svg>
<div class="t" style="left:479.50px;top:652px;font-size:14.45px;letter-spacing:-1.050px;color:#2b3140;font-weight:normal;">15</div>
<div class="b" style="left:526px;top:646px;width:35px;height:26px;background:#f1f1f1;border-radius:3px;"></div>
<div class="t" style="left:526px;top:646px;width:35px;line-height:26px;text-align:center;font-size:14.45px;color:#2b3140;">1</div>
<div class="b" style="left:573px;top:646px;width:36px;height:26px;background:#f1f1f1;border-radius:3px;"></div>
<div class="t" style="left:573px;top:646px;width:36px;line-height:26px;text-align:center;font-size:14.45px;color:#2b3140;">5</div>
<div class="b" style="left:621px;top:646px;width:35px;height:26px;background:#f1f1f1;border-radius:3px;"></div>
<div class="t" style="left:621px;top:646px;width:35px;line-height:26px;text-align:center;font-size:14.45px;color:#2b3140;">4</div>
<div class="b" style="left:668px;top:646px;width:35px;height:26px;background:#f1f1f1;border-radius:3px;"></div>
<div class="t" style="left:668px;top:646px;width:35px;line-height:26px;text-align:center;font-size:14.45px;color:#2b3140;">5</div>
<div class="b" style="left:739px;top:648px;width:83px;height:24px;background:#eceef1;border-radius:12px;"></div>
<div class="t" style="left:747.20px;top:654px;font-size:12.5px;letter-spacing:0.022px;color:#2b3140;font-weight:normal;">Unreviewed</div>
<div class="b" style="left:1044px;top:647px;width:74px;height:24px;background:#fde8eb;border-radius:12px;"></div>
<div class="t" style="left:1052.60px;top:652px;font-size:12.2px;letter-spacing:-0.144px;color:#d9344d;font-weight:normal;">Reachable</div>
<div class="b" style="left:1194px;top:648px;width:60px;height:24px;background:#dddddd;border-radius:12px;"></div>
<div class="t" style="left:1202.00px;top:654px;font-size:12.6px;letter-spacing:0.114px;color:#6b6b6b;font-weight:normal;">Inactive</div>
<div class="b" style="left:1414px;top:647px;width:60px;height:24px;background:#dedede;border-radius:12px;"></div>
<div class="t" style="left:1422.60px;top:652px;font-size:12.5px;letter-spacing:-0.770px;color:#2f3440;font-weight:normal;">DEBIAN</div>
<div class="t" style="left:1564.10px;top:652px;font-size:14.4px;letter-spacing:-0.021px;color:#2b3140;font-weight:normal;">2.13-38+deb7u12</div>
<svg class="b" style="left:1686.0px;top:652px;" width="13" height="15" viewBox="0 0 13 15"><path d="M4 3 L4 2 Q4 1 5 1 L9.5 1 L11.5 3 L11.5 9 Q11.5 10 10.5 10 L5 10 Q4 10 4 9 Z" fill="none" stroke="#0b3b8f" stroke-width="1.3" stroke-linejoin="round"/><path d="M3 4.3 Q1 4.5 1 6 L1 12.5 Q1 13.5 2 13.5 L7.5 13.5 Q8.5 13.5 8.5 12.5 L8.5 10.5" fill="none" stroke="#0b3b8f" stroke-width="1.3"/></svg>
<div class="t" style="left:1764.3px;top:648px;width:50px;height:21px;line-height:21px;overflow:hidden;font-size:15px;color:#2b3140;"><span style="position:relative;top:0px">grpc/csharp</span></div>
<div class="b" style="left:1814px;top:637px;width:1px;height:43px;background:#c8cdd6;"></div>
<div class="b" style="left:1833px;top:653px;width:2px;height:2px;background:#8a909b;"></div>
<div class="b" style="left:1833px;top:658px;width:2px;height:2px;background:#8a909b;"></div>
<div class="b" style="left:1833px;top:663px;width:2px;height:2px;background:#8a909b;"></div>
<div class="b" style="left:261px;top:680px;width:1601px;height:1px;background:#dde1ea;"></div>
<div class="b" style="left:279px;top:695px;width:16px;height:16px;border:2px solid #8e8e8e;border-radius:2px;"></div>
<div class="t" style="left:307.20px;top:695px;font-size:15px;letter-spacing:-0.237px;color:#2b3140;font-weight:normal;">libc6</div>
<svg class="b" style="left:346px;top:696px;" width="13" height="15" viewBox="0 0 13 15"><path d="M4 3 L4 2 Q4 1 5 1 L9.5 1 L11.5 3 L11.5 9 Q11.5 10 10.5 10 L5 10 Q4 10 4 9 Z" fill="none" stroke="#0b3b8f" stroke-width="1.3" stroke-linejoin="round"/><path d="M3 4.3 Q1 4.5 1 6 L1 12.5 Q1 13.5 2 13.5 L7.5 13.5 Q8.5 13.5 8.5 12.5 L8.5 10.5" fill="none" stroke="#0b3b8f" stroke-width="1.3"/></svg>
<div class="t" style="left:479.50px;top:696px;font-size:14.45px;letter-spacing:-1.050px;color:#2b3140;font-weight:normal;">15</div>
<div class="b" style="left:526px;top:690px;width:35px;height:26px;background:#f1f1f1;border-radius:3px;"></div>
<div class="t" style="left:526px;top:690px;width:35px;line-height:26px;text-align:center;font-size:14.45px;color:#2b3140;">1</div>
<div class="b" style="left:573px;top:690px;width:36px;height:26px;background:#f1f1f1;border-radius:3px;"></div>
<div class="t" style="left:573px;top:690px;width:36px;line-height:26px;text-align:center;font-size:14.45px;color:#2b3140;">5</div>
<div class="b" style="left:621px;top:690px;width:35px;height:26px;background:#f1f1f1;border-radius:3px;"></div>
<div class="t" style="left:621px;top:690px;width:35px;line-height:26px;text-align:center;font-size:14.45px;color:#2b3140;">4</div>
<div class="b" style="left:668px;top:690px;width:35px;height:26px;background:#f1f1f1;border-radius:3px;"></div>
<div class="t" style="left:668px;top:690px;width:35px;line-height:26px;text-align:center;font-size:14.45px;color:#2b3140;">5</div>
<div class="b" style="left:739px;top:692px;width:83px;height:24px;background:#eceef1;border-radius:12px;"></div>
<div class="t" style="left:747.20px;top:698px;font-size:12.5px;letter-spacing:0.022px;color:#2b3140;font-weight:normal;">Unreviewed</div>
<div class="b" style="left:1044px;top:691px;width:74px;height:24px;background:#fde8eb;border-radius:12px;"></div>
<div class="t" style="left:1052.60px;top:696px;font-size:12.2px;letter-spacing:-0.144px;color:#d9344d;font-weight:normal;">Reachable</div>
<div class="b" style="left:1194px;top:692px;width:60px;height:24px;background:#dddddd;border-radius:12px;"></div>
<div class="t" style="left:1202.00px;top:698px;font-size:12.6px;letter-spacing:0.114px;color:#6b6b6b;font-weight:normal;">Inactive</div>
<div class="b" style="left:1414px;top:691px;width:60px;height:24px;background:#dedede;border-radius:12px;"></div>
<div class="t" style="left:1422.60px;top:696px;font-size:12.5px;letter-spacing:-0.770px;color:#2f3440;font-weight:normal;">DEBIAN</div>
<div class="t" style="left:1564.10px;top:696px;font-size:14.4px;letter-spacing:-0.021px;color:#2b3140;font-weight:normal;">2.13-38+deb7u12</div>
<svg class="b" style="left:1686.0px;top:696px;" width="13" height="15" viewBox="0 0 13 15"><path d="M4 3 L4 2 Q4 1 5 1 L9.5 1 L11.5 3 L11.5 9 Q11.5 10 10.5 10 L5 10 Q4 10 4 9 Z" fill="none" stroke="#0b3b8f" stroke-width="1.3" stroke-linejoin="round"/><path d="M3 4.3 Q1 4.5 1 6 L1 12.5 Q1 13.5 2 13.5 L7.5 13.5 Q8.5 13.5 8.5 12.5 L8.5 10.5" fill="none" stroke="#0b3b8f" stroke-width="1.3"/></svg>
<div class="t" style="left:1764.3px;top:692px;width:50px;height:21px;line-height:21px;overflow:hidden;font-size:15px;color:#2b3140;"><span style="position:relative;top:0px">grpc/csharp</span></div>
<div class="b" style="left:1814px;top:681px;width:1px;height:43px;background:#c8cdd6;"></div>
<div class="b" style="left:1833px;top:697px;width:2px;height:2px;background:#8a909b;"></div>
<div class="b" style="left:1833px;top:702px;width:2px;height:2px;background:#8a909b;"></div>
<div class="b" style="left:1833px;top:707px;width:2px;height:2px;background:#8a909b;"></div>
<div class="b" style="left:261px;top:724px;width:1601px;height:1px;background:#dde1ea;"></div>
<div class="b" style="left:1854px;top:385px;width:8px;height:328px;background:#d6d6d6;border-radius:4px 4px 0 0;"></div>
</body></html>
